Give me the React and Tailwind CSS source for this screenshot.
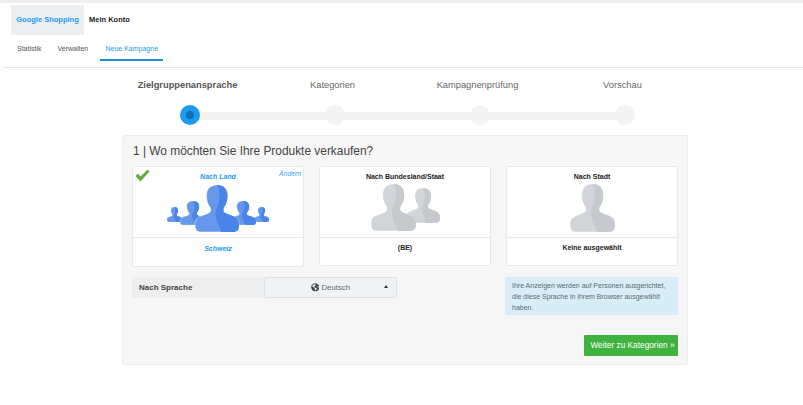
import React from "react";
import { FaGlobeAmericas } from "react-icons/fa";

const HEAD =
  "M22 0C14 0 11.5 5 11.5 11C11.5 16 13 20 15.5 23L15.5 26C15.5 28 10 29.5 5 31.5C1 33 0 36 0 40C0 45 2 47 6 47L38 47C42 47 44 45 44 40C44 36 43 33 39 31.5C34 29.5 28.5 28 28.5 26L28.5 23C31 20 32.5 16 32.5 11C32.5 5 30 0 22 0Z";
const SHADE =
  "M22 0C30 0 32.5 5 32.5 11C32.5 16 31 20 28.5 23L28.5 26C28.5 28 34 29.5 39 31.5C43 33 44 36 44 40C44 45 42 47 38 47L26 47C25 41 20 35 20.5 28C21 23 24.5 19 24.5 11C24.5 6 24 2 22 0Z";

const steps = ["Zielgruppenansprache", "Kategorien", "Kampagnenprüfung", "Vorschau"];

function Person({ x = 0, y = 0, w = 44, h = 47, light, dark }) {
  return (
    <g transform={`translate(${x} ${y}) scale(${w / 44} ${h / 47})`}>
      <path d={HEAD} fill={light} stroke="#ffffff" strokeWidth="0.5" />
      <path d={SHADE} fill={dark} />
    </g>
  );
}

function CountryIcon() {
  const c = { light: "#6598ea", dark: "#4a84e9" };
  return (
    <svg className="block" width="102" height="47" viewBox="0 0 102 47">
      <Person x={0} y={22} w={15} h={15} {...c} />
      <Person x={87} y={22} w={15} h={15} {...c} />
      <Person x={13} y={16} w={26} h={24} {...c} />
      <Person x={63} y={16} w={26} h={24} {...c} />
      <Person x={28} y={0} w={44} h={47} {...c} />
    </svg>
  );
}

function StateIcon() {
  const c = { light: "#d1d4d8", dark: "#c6c9cd" };
  return (
    <svg className="block" width="69" height="47" viewBox="0 0 69 47">
      <Person x={35} y={4} w={34} h={35} {...c} />
      <Person x={0} y={0} w={45} h={47} {...c} />
    </svg>
  );
}

function CityIcon() {
  return (
    <svg className="block" width="45" height="48" viewBox="0 0 45 48">
      <Person w={45} h={48} light="#d1d4d8" dark="#c6c9cd" />
    </svg>
  );
}

function Card({ title, value, active, children }) {
  const tone = active ? "text-[#1a9bf0] italic" : "text-[#222]";
  return (
    <div className={`relative w-[172px] bg-white border border-[#e8e8e8] rounded-[2px] ${active ? "h-[101px]" : "h-[100px]"}`}>
      <div className="h-[71px] flex flex-col items-center border-b border-[#e8e8e8]">
        <p className={`text-[7px] leading-[10px] font-bold mt-[5px] ${tone}`}>{title}</p>
        <div className={active ? "mt-[3px]" : "mt-[2px]"}>{children}</div>
      </div>
      <p className={`text-[7px] leading-[10px] font-bold text-center ${active ? "mt-[6px]" : "mt-[5px]"} ${tone}`}>{value}</p>
    </div>
  );
}

export default function App() {
  return (
    <div className="w-[803px] h-[405px] overflow-hidden bg-white font-['Liberation_Sans',Arial,sans-serif]">
      <div className="h-[3px] bg-[#eeeff1]" />

      <div className="flex items-center h-[30px] mt-[2px] ml-[11px]">
        <div className="w-[73px] h-full flex items-center justify-center bg-[#edeef0] text-[7.5px] font-bold text-[#1a9bf0]">
          Google Shopping
        </div>
        <span className="ml-[5px] text-[7.5px] font-bold text-[#222]">Mein Konto</span>
      </div>

      <nav className="flex items-stretch h-[33px] ml-[3px] border-b border-[#e6e6e6] text-[7px] text-[#555]">
        <a className="ml-[14px] mt-[9px]">Statistik</a>
        <a className="ml-[16px] mt-[9px]">Verwalten</a>
        <a className="ml-[12px] w-[63px] h-[26px] text-center pt-[9px] border-b-2 border-[#1a8fe0] text-[#1a9bf0]">Neue Kampagne</a>
      </nav>

      <div className="relative w-[580px] ml-[117.5px] mt-[10px] grid grid-cols-4">
        <div className="absolute left-[72px] right-[73px] top-[34px] h-[8px] bg-[#f3f3f3]" />
        {steps.map((s, i) => (
          <div key={s} className="relative flex flex-col items-center">
            <span className={`mr-[5px] text-[9.3px] leading-[14px] whitespace-nowrap ${i === 0 ? "font-bold text-[#555]" : "text-[#666]"}`}>{s}</span>
            {i === 0 ? (
              <span className="mt-[13px] w-5 h-5 rounded-full bg-[#1a9bf0] flex items-center justify-center">
                <span className="w-2 h-2 rounded-full bg-[#146fae]" />
              </span>
            ) : (
              <span className="mt-[13px] w-5 h-5 rounded-full bg-[#f3f3f3]" />
            )}
          </div>
        ))}
      </div>

      <section className="w-[566px] h-[230px] ml-[122px] mt-[10px] bg-[#f6f6f6] border border-[#ececec] rounded-[2px] px-[9px]">
        <h2 className="text-[11.9px] leading-[16px] text-[#444] mt-[7px] ml-[1px]">1 | Wo möchten Sie Ihre Produkte verkaufen?</h2>

        <div className="flex justify-between w-[546px] mt-[7px]">
          <Card title="Nach Land" value="Schweiz" active>
            <CountryIcon />
            <svg className="absolute left-[2px] top-[2px]" width="15" height="13" viewBox="0 0 15 13">
              <path d="M0.5 7L3 4.5L5.5 7.5L12.5 0.5L14.5 2.5L5.5 12.5Z" fill="#5cb03a" />
            </svg>
            <span className="absolute right-[2px] top-[2px] text-[6.8px] leading-[10px] italic text-[#3aa8f2]">Ändern</span>
          </Card>
          <Card title="Nach Bundesland/Staat" value="(BE)">
            <StateIcon />
          </Card>
          <Card title="Nach Stadt" value="Keine ausgewählt">
            <CityIcon />
          </Card>
        </div>

        <div className="flex justify-between items-start w-[546px] mt-[10px]">
          <div className="flex w-[265px] h-[21px] rounded-[2px]">
            <div className="w-[132px] flex items-center pl-[7px] bg-[#eeeeee] text-[8px] font-bold text-[#444] rounded-l-[2px]">Nach Sprache</div>
            <div className="relative w-[133px] flex items-center justify-center gap-[2px] bg-[#eff3f6] border border-[#dde1e5] rounded-[2px] text-[7.8px] text-[#666]">
              <FaGlobeAmericas className="text-[#444] text-[8.5px]" />
              Deutsch
              <span className="absolute right-[8px] top-[7px] w-0 h-0 border-x-[2px] border-x-transparent border-b-[3px] border-b-[#333]" />
            </div>
          </div>
          <p className="w-[173px] h-[38px] bg-[#d9edf7] px-[7px] py-[3px] text-[7px] leading-[11px] text-[#5f6a72]">
            Ihre Anzeigen werden auf Personen ausgerichtet, die diese Sprache in ihrem Browser ausgewählt haben.
          </p>
        </div>

        <div className="flex justify-end w-[546px] mt-[20px]">
          <button className="w-[94px] h-[21px] pl-[3px] bg-[#40b23f] text-white text-[8.3px] rounded-[1px]">Weiter zu Kategorien »</button>
        </div>
      </section>
    </div>
  );
}
